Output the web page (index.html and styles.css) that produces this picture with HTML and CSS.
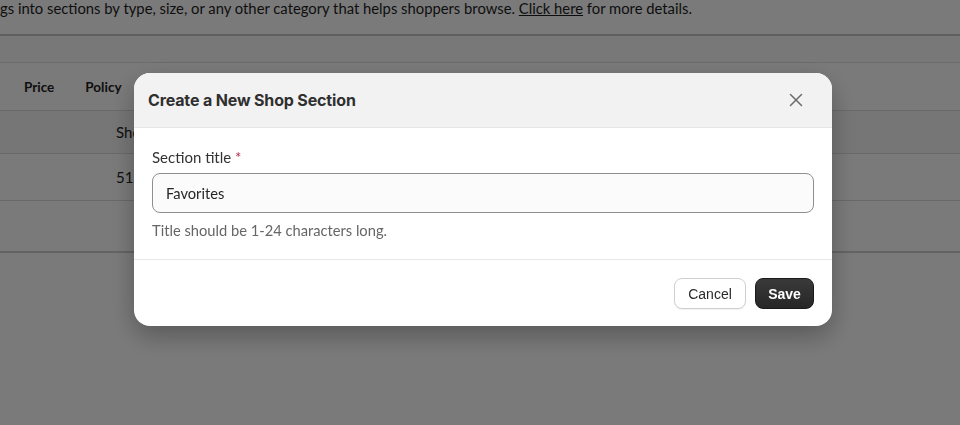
FILE: index.html
```html
<!DOCTYPE html>
<html>
<head>
<meta charset="utf-8">
<link rel="stylesheet" href="styles.css">
</head>
<body>
<div class="page">
  <p class="intro">gs into sections by type, size, or any other category that helps shoppers browse. <a class="link">Click here</a> for more details.</p>
  <div class="band"></div>
  <div class="table">
    <div class="row head">
      <span class="col c1">Price</span>
      <span class="col c2">Policy</span>
    </div>
    <div class="row r2">
      <span class="col c3">Shop</span>
    </div>
    <div class="row r3">
      <span class="col c3">519</span>
    </div>
    <div class="row tall"></div>
  </div>
</div>

<div class="overlay">
  <div class="modal">
    <div class="modal-head">
      <h2 class="modal-title">Create a New Shop Section</h2>
      <button class="close" aria-label="Close">
        <svg width="14" height="14" viewBox="0 0 14 14"><path d="M1.5 1.5 L12.5 12.5 M12.5 1.5 L1.5 12.5" stroke="#6b6b6b" stroke-width="1.5" stroke-linecap="round" fill="none"/></svg>
      </button>
    </div>
    <div class="modal-body">
      <label class="label">Section title <span class="req">*</span></label>
      <div class="input">Favorites</div>
      <p class="help">Title should be 1-24 characters long.</p>
    </div>
    <div class="modal-foot">
      <button class="btn cancel">Cancel</button>
      <button class="btn save">Save</button>
    </div>
  </div>
</div>
</body>
</html>
```

FILE: styles.css
```css
html, body {
  margin: 0;
  padding: 0;
  background: #ffffff;
  font-family: Lato, "Noto Sans", Arial, sans-serif;
  color: #222;
}

.page {
  width: 960px;
  height: 425px;
  overflow: hidden;
}

.intro {
  margin: 0;
  height: 34px;
  padding-top: 0;
  font-size: 14.8px;
  line-height: 16px;
  color: #1e1e1e;
  white-space: nowrap;
  border-bottom: 2px solid #c8c8c8;
}

.link {
  text-decoration: underline;
  color: #1e1e1e;
}

.band {
  height: 26px;
  background: #fbfbfb;
  border-bottom: 1px solid #e0e0e0;
}

.row {
  display: flex;
  align-items: center;
  height: 42px;
  border-bottom: 1px solid #dcdcdc;
  font-size: 14px;
}

.row.head {
  height: 47px;
  font-weight: 700;
  font-size: 13.5px;
  background: #ffffff;
}

.row.r2 {
  background: #f7f7f7;
}

.row.r3 {
  height: 46px;
}

.row.tall {
  height: 50px;
  border-bottom: 2px solid #d0d0d0;
}

.col.c1 { margin-left: 24px; }
.col.c2 { margin-left: 31px; }
.col.c3 { margin-left: 116px; font-size: 15px; }

.overlay {
  position: fixed;
  inset: 0;
  background: rgba(0, 0, 0, 0.52);
  display: flex;
  justify-content: center;
  align-items: flex-start;
  padding-top: 73px;
}

.modal {
  width: 698px;
  margin-left: 6px;
  background: #ffffff;
  border-radius: 16px;
  overflow: hidden;
  box-shadow: 0 10px 26px rgba(0, 0, 0, 0.28);
}

.modal-head {
  height: 54px;
  display: flex;
  align-items: center;
  justify-content: space-between;
  padding: 0 24px 0 14px;
  background: #f2f2f2;
  border-bottom: 1px solid #e6e6e6;
}

.modal-title {
  margin: 0;
  font-size: 16px;
  font-weight: 700;
  color: #2f2f2f;
  font-family: Inter, Lato, sans-serif;
  letter-spacing: -0.15px;
}

.close {
  width: 24px;
  height: 24px;
  border: 0;
  background: transparent;
  padding: 0;
  display: flex;
  align-items: center;
  justify-content: center;
}

.modal-body {
  padding: 19px 18px 19px;
  border-bottom: 1px solid #e8e8e8;
}

.label {
  display: block;
  font-size: 15px;
  line-height: 20px;
  color: #333;
  margin-bottom: 6px;
}

.req {
  color: #b3284a;
}

.input {
  height: 38px;
  border: 1px solid #8f8f8f;
  border-radius: 8px;
  background: #fbfbfb;
  display: flex;
  align-items: center;
  padding: 0 13px;
  font-size: 14.7px;
  color: #262626;
}

.help {
  margin: 7px 0 0;
  font-size: 14.7px;
  line-height: 20px;
  color: #666;
}

.modal-foot {
  display: flex;
  justify-content: flex-end;
  gap: 9px;
  padding: 18px 18px 17px;
}

.btn {
  height: 31px;
  border-radius: 8px;
  font-family: "Liberation Sans", Arial, sans-serif;
  font-size: 14px;
  padding: 0;
  cursor: pointer;
}

.cancel {
  width: 72px;
  background: #ffffff;
  border: 1px solid #cfcfcf;
  color: #2a2a2a;
  font-weight: 400;
  box-shadow: 0 1px 1px rgba(0, 0, 0, 0.06);
}

.save {
  width: 59px;
  background: linear-gradient(#3a3a3a, #262626);
  border: 1px solid #1a1a1a;
  color: #ffffff;
  font-weight: 700;
}
```
